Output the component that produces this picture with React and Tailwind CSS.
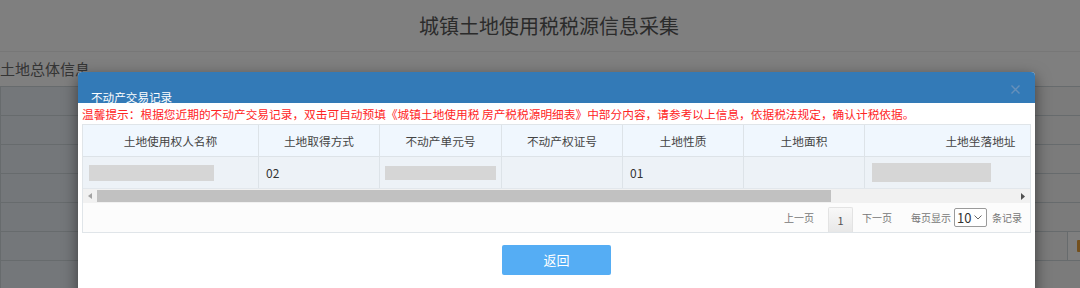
const cols = [
  { title: "土地使用权人名称", w: "w-[176px]" },
  { title: "土地取得方式", w: "w-[121px]" },
  { title: "不动产单元号", w: "w-[122px]" },
  { title: "不动产权证号", w: "w-[121px]" },
  { title: "土地性质", w: "w-[121px]" },
  { title: "土地面积", w: "w-[121px]" },
  { title: "土地坐落地址", w: "w-[232px]" },
];

function BgRow({ last }) {
  return (
    <div className="flex h-[29px] border-b border-[#cfd7db]">
      <div className="w-[300px] border-l border-r border-[#cfd7db] bg-[#e8eff5]" />
      <div className="flex-1 bg-[#f6f6f6]" />
      {last && (
        <div className="flex w-[13px] shrink-0 items-center border-l border-[#cfd7db] bg-white pl-[9px]">
          <div className="h-[12px] w-[10px] shrink-0 rounded-[1px] bg-[#e9a13a]" />
        </div>
      )}
    </div>
  );
}

export default function App() {
  return (
    <div className="relative h-[288px] w-[1080px] overflow-hidden bg-white font-['Noto_Sans_CJK_SC',sans-serif]">
      {/* page underneath */}
      <div className="flex h-[52px] items-center justify-center border-b border-[#eeeeee] pl-[18px] text-[20px] text-[#575757]">
        城镇土地使用税税源信息采集
      </div>
      <div className="flex h-[34px] items-center text-[15px] text-[#6a6a6a]">土地总体信息</div>
      <div className="border-t border-[#cfd7db]">
        <BgRow />
        <BgRow />
        <BgRow />
        <BgRow />
        <BgRow />
        <BgRow last />
        <BgRow />
      </div>

      {/* backdrop */}
      <div className="absolute inset-0 bg-black/50" />

      {/* modal */}
      <div className="absolute left-[78px] top-[72px] h-[260px] w-[957px] rounded-t-[4px] bg-white shadow-[0_5px_15px_rgba(0,0,0,0.5)]">
        <div className="relative h-[31px] rounded-t-[4px] bg-[#337ab7] pl-[13px] pt-[19px] text-[11.6px] leading-[12px] text-white">
          不动产交易记录
          <svg className="absolute right-[15px] top-[13px]" width="9" height="9" viewBox="0 0 9 9">
            <path d="M0.5 0.5L8.5 8.5M8.5 0.5L0.5 8.5" stroke="#6690ba" strokeWidth="1.4" />
          </svg>
        </div>

        <div className="px-[4px]">
          <div className="flex h-[21px] items-center whitespace-nowrap text-[11.7px] text-[#ff2424]">
            温馨提示：根据您近期的不动产交易记录，双击可自动预填《城镇土地使用税 房产税税源明细表》中部分内容，请参考以上信息，依据税法规定，确认计税依据。
          </div>

          <div className="border border-[#e0e5e9]">
            <div className="overflow-hidden">
              <div className="w-max">
                <div className="flex h-[32px] border-b border-[#dde3e8] bg-[#f0f7fe]">
                  {cols.map((c) => (
                    <div key={c.title} className={`${c.w} flex shrink-0 items-center justify-center border-r border-[#dde3e8] text-[11.7px] text-[#444]`}>
                      {c.title}
                    </div>
                  ))}
                </div>
                <div className="flex h-[32px] border-b border-[#e2e7ec] bg-[#edf2f7] text-[12px] text-[#333]">
                  <div className="flex w-[176px] shrink-0 items-center border-r border-[#dde3e8] pl-[6px]">
                    <div className="h-[16px] w-[125px] bg-[#d6d6d6]" />
                  </div>
                  <div className="flex w-[121px] shrink-0 items-center border-r border-[#dde3e8] pl-[7px]">02</div>
                  <div className="flex w-[122px] shrink-0 items-center border-r border-[#dde3e8] pl-[5px]">
                    <div className="h-[14px] w-[111px] bg-[#d6d6d6]" />
                  </div>
                  <div className="w-[121px] shrink-0 border-r border-[#dde3e8]" />
                  <div className="flex w-[121px] shrink-0 items-center border-r border-[#dde3e8] pl-[7px]">01</div>
                  <div className="w-[121px] shrink-0 border-r border-[#dde3e8]" />
                  <div className="flex w-[232px] shrink-0 items-center pl-[7px]">
                    <div className="h-[19px] w-[119px] bg-[#d6d6d6]" />
                  </div>
                </div>
              </div>
            </div>

            {/* horizontal scrollbar */}
            <div className="flex h-[14px] items-center bg-[#f1f1f1]">
              <div className="flex w-[14px] shrink-0 items-center justify-center">
                <svg width="4" height="6" viewBox="0 0 4 6"><path d="M4 0L0 3L4 6Z" fill="#a3a3a3" /></svg>
              </div>
              <div className="h-[12px] w-[734px] shrink-0 bg-[#c1c1c1]" />
              <div className="flex-1" />
              <div className="flex w-[14px] shrink-0 items-center justify-center">
                <svg width="4" height="7" viewBox="0 0 4 7"><path d="M0 0L4 3.5L0 7Z" fill="#505050" /></svg>
              </div>
            </div>

            {/* pagination */}
            <div className="flex h-[29px] items-center justify-end bg-[#fcfcfc] pr-[8px] text-[10px] text-[#777]">
              <span className="w-[30px] shrink-0">上一页</span>
              <div className="ml-[14px] flex h-[25px] w-[25px] shrink-0 items-center justify-center self-end rounded-t-[2px] border border-b-0 border-[#e3e3e3] bg-gradient-to-b from-[#f8f8f8] to-[#e8e8e8] text-[11px] text-[#555]">
                1
              </div>
              <span className="ml-[9px] w-[30px] shrink-0">下一页</span>
              <span className="ml-[19px] w-[40px] shrink-0">每页显示</span>
              <div className="ml-[3px] flex h-[19px] w-[33px] shrink-0 items-center rounded-[2px] border border-[#9a9a9a] bg-white pl-[2px] text-[13px] text-[#333]">
                10
                <svg className="ml-[3px]" width="8" height="5" viewBox="0 0 8 5">
                  <path d="M0.5 0.5L4 4L7.5 0.5" fill="none" stroke="#666" strokeWidth="1" />
                </svg>
              </div>
              <span className="ml-[5px] w-[30px] shrink-0">条记录</span>
            </div>
          </div>
        </div>

        <div className="mt-[12px] flex justify-center">
          <button className="h-[30px] w-[109px] rounded-[2px] bg-[#55adf4] text-[13px] text-white">返回</button>
        </div>
      </div>
    </div>
  );
}
